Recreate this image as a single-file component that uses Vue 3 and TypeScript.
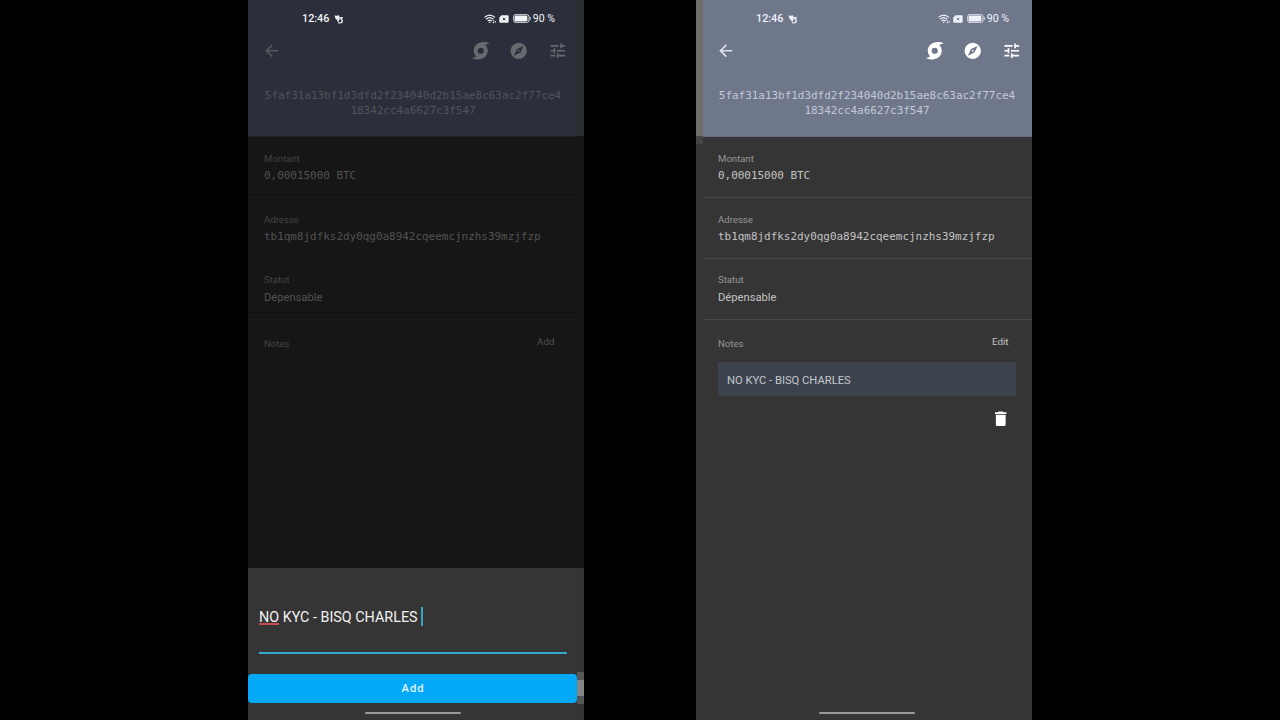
<script setup lang="ts">
interface Phone {
  id: string
  action: string
  note: string
  dimmed: boolean
}

const phones: Phone[] = [
  { id: 'editing', action: 'Add', note: '', dimmed: true },
  { id: 'saved', action: 'Edit', note: 'NO KYC - BISQ CHARLES', dimmed: false },
]

const hash = ['5faf31a13bf1d3dfd2f234040d2b15ae8c63ac2f77ce4', '18342cc4a6627c3f547']

const rows = [
  { label: 'Montant', value: '0,00015000 BTC', mono: true },
  { label: 'Adresse', value: 'tb1qm8jdfks2dy0qg0a8942cqeemcjnzhs39mzjfzp', mono: true },
  { label: 'Statut', value: 'Dépensable', mono: false },
]
</script>

<template>
  <main class="stage">
    <section v-for="p in phones" :key="p.id" class="phone" :class="p.dimmed ? 'dimmed' : 'lit'">
      <div class="screen">
        <header class="header">
          <div class="status">
            <span class="clock">12:46</span>
            <svg class="notif" viewBox="0 0 10 10">
              <path d="M0.6 1.6L3 1.8L4.8 1.2L5.6 3L5.4 5.8L4.2 8.4L3 6L1.4 4.4z" fill="currentColor" />
              <path d="M5.4 4L8 3.8L7.2 5.4L8.4 6.6L7.6 8.6L4.2 8.8" fill="none" stroke="currentColor" stroke-width="1.3" />
            </svg>
            <span class="grow"></span>
            <svg class="wifi" viewBox="0 0 12 10">
              <g fill="none" stroke="currentColor" stroke-width="1.2">
                <path d="M0.5 3.4Q5.7 -1.3 11 3.4" />
                <path d="M2.1 5.2Q5.7 2 9.4 5.2" />
                <path d="M3.7 6.9Q5.7 5.2 7.8 6.9" />
              </g>
              <path d="M4.4 7.8h2.6L5.7 9.3zM9.4 5.9l1.2 1.4h-2.4zM9.4 9.6l1.2-1.4h-2.4zM10.8 6.9h1v1.6h-1z" fill="currentColor" />
            </svg>
            <svg class="sim" viewBox="0 0 10 8">
              <path fill="currentColor" d="M2.6 0.2H8.6Q9.6 0.2 9.6 1.2V6.8Q9.6 7.8 8.6 7.8H1.3Q0.3 7.8 0.3 6.8V2.5z" />
              <path class="cut" d="M3.7 2.7l2.6 2.6M6.3 2.7L3.7 5.3" fill="none" stroke-width="0.9" />
            </svg>
            <svg class="battery" viewBox="0 0 18 9">
              <rect x="0.6" y="0.4" width="15.4" height="8.2" rx="2.4" fill="none" stroke="currentColor" stroke-width="0.8" />
              <rect x="1.6" y="1.4" width="12.8" height="6.2" rx="1.3" fill="currentColor" />
              <path d="M16.9 2.8q1 1.7 0 3.4" fill="none" stroke="currentColor" stroke-width="0.9" />
            </svg>
            <span class="percent">90 %</span>
          </div>
          <div class="toolbar">
            <svg class="icon back" viewBox="0 0 24 24"><path d="M20 11H7.83l5.59-5.59L12 4l-8 8 8 8 1.41-1.41L7.83 13H20v-2z" /></svg>
            <span class="grow"></span>
            <svg class="icon" viewBox="0 0 24 24">
              <path fill-rule="evenodd" d="M22.9 3.1C20.6 1.6 16.6 1 13 1.6C7.2 2.6 3.2 7.2 3.4 12.4C3.5 15 4.6 17.2 6.4 18.8C4.8 20.3 3 20.6 1.1 20.9C3.4 22.4 7.4 23 11 22.4C16.8 21.4 20.8 16.8 20.6 11.6C20.5 9 19.4 6.8 17.6 5.2C19.2 3.7 21 3.4 22.9 3.1zM12 8.2a3.8 3.8 0 1 0 0 7.6a3.8 3.8 0 1 0 0-7.6z" />
            </svg>
            <svg class="icon" viewBox="0 0 24 24"><path d="M12 10.9c-.61 0-1.1.49-1.1 1.1s.49 1.1 1.1 1.1c.61 0 1.1-.49 1.1-1.1s-.49-1.1-1.1-1.1zM12 2C6.48 2 2 6.48 2 12s4.48 10 10 10 10-4.48 10-10S17.52 2 12 2zm2.19 12.19L6 18l3.81-8.19L18 6l-3.81 8.19z" /></svg>
            <svg class="icon" viewBox="0 0 24 24"><path d="M3 17v2h6v-2H3zM3 5v2h10V5H3zm10 16v-2h8v-2h-8v-2h-2v6h2zM7 9v2H3v2h4v2h2V9H7zm14 4v-2H11v2h10zm-6-4h2V7h4V5h-4V3h-2v6z" /></svg>
          </div>
          <div class="hash mono"><div v-for="line in hash" :key="line">{{ line }}</div></div>
        </header>

        <div v-for="r in rows" :key="r.label" class="row" :class="r.label.toLowerCase()">
          <div class="label">{{ r.label }}</div>
          <div class="value" :class="{ mono: r.mono }">{{ r.value }}</div>
        </div>

        <div class="notes">
          <div class="label">Notes</div>
          <button class="action">{{ p.action }}</button>
        </div>
        <template v-if="p.note">
          <div class="note">{{ p.note }}</div>
          <svg class="icon trash" viewBox="0 0 24 24"><path d="M6 19c0 1.1.9 2 2 2h8c1.1 0 2-.9 2-2V7H6v12zM19 4h-3.5l-1-1h-5l-1 1H5v2h14V4z" /></svg>
        </template>

        <div v-if="p.dimmed" class="sheet">
          <div class="field">
            <span class="typo">NO</span><span class="rest">&nbsp;KYC - BISQ CHARLES</span><i class="caret"></i>
          </div>
          <button class="submit">Add</button>
        </div>
        <div class="homebar"></div>
      </div>
      <div class="edge">
        <div class="edge-top"></div>
        <div class="edge-mid"></div>
        <div v-if="p.dimmed" class="edge-sheet"><i></i></div>
      </div>
    </section>
  </main>
</template>

<style>
body {
  margin: 0;
  background: #000;
}
</style>

<style scoped>
* {
  box-sizing: border-box;
}
.stage {
  width: 1280px;
  height: 720px;
  padding: 0 248px;
  display: flex;
  justify-content: space-between;
  background: #000;
  overflow: hidden;
  font-family: Roboto, "Liberation Sans", sans-serif;
}
.phone {
  width: 336px;
  height: 720px;
  display: flex;
  color: var(--text);
  background: var(--body);
}
.dimmed {
  --head: #2c2f3b;
  --body: #161616;
  --edge-head: #2b2c2e;
  --text: #525252;
  --label: #434343;
  --hash: #515359;
  --icon: #68696c;
  --back: #55575c;
  --line: #1c1c1c;
  --status: #f3f4f6;
}
.lit {
  --head: #6f778b;
  --body: #353535;
  --edge-head: #6e6d69;
  --text: #c3c3c3;
  --label: #969696;
  --hash: #c3c9d6;
  --icon: #fff;
  --back: #dce0ef;
  --line: #464746;
  --status: #eff2fb;
  flex-direction: row-reverse;
}
.screen {
  width: 329px;
  height: 720px;
  display: flex;
  flex-direction: column;
  flex: none;
}
.lit .screen {
  --shift: -1px;
}
.header {
  height: 137px;
  background: var(--head);
  border-bottom: 1px solid #202229;
  flex: none;
}
.lit .header {
  border-bottom-color: #656c7d;
}
.status,
.toolbar,
.hash,
.row > div,
.notes {
  transform: translateX(var(--shift, 0));
}
.status {
  height: 37px;
  padding: 0 22px 0 54px;
  display: flex;
  align-items: center;
  color: var(--status);
  font-size: 10.8px;
}
.grow {
  flex: 1;
}
.clock {
  font-weight: 500;
}
.notif {
  width: 10px;
  height: 10px;
  margin-left: 5px;
}
.wifi {
  width: 12px;
  height: 10px;
  margin-right: 3px;
}
.sim {
  width: 10px;
  height: 8px;
  margin-right: 4px;
}
.cut {
  stroke: var(--head);
}
.battery {
  width: 18px;
  height: 9px;
  margin-right: 2px;
}
.percent {
  font-size: 10.6px;
}
.toolbar {
  height: 27px;
  padding: 0 10px 0 14px;
  display: flex;
  align-items: center;
  gap: 18.8px;
}
.icon {
  width: 19.5px;
  height: 19.5px;
  fill: var(--icon);
  flex: none;
}
.back {
  fill: var(--back);
}
.mono {
  font-family: "DejaVu Sans Mono", "Liberation Mono", monospace;
  font-size: 10.95px;
}
.hash {
  margin-top: 25px;
  padding-left: 1px;
  text-align: center;
  line-height: 14.5px;
  color: var(--hash);
}
.row {
  height: 61px;
  padding: 15px 16px 0;
  border-bottom: 1px solid var(--line);
  flex: none;
}
.dimmed .adresse {
  border-bottom-color: transparent;
}
.statut {
  padding-top: 14px;
}
.label {
  font-size: 9.6px;
  line-height: 14px;
  color: var(--label);
}
.value {
  margin-top: 4px;
  line-height: 14px;
  font-size: 11.2px;
}
.value.mono {
  margin-top: 3px;
  font-size: 10.95px;
}
.notes {
  height: 42px;
  padding: 14px 22.5px 0 16px;
  display: flex;
  justify-content: space-between;
  flex: none;
}
.notes .label {
  padding-top: 3px;
}
button {
  border: 0;
  padding: 0;
  background: none;
  font-family: inherit;
}
.action {
  height: 16px;
  font-size: 9.8px;
  line-height: 16px;
  color: var(--text);
}
.note {
  height: 34px;
  margin: 0 16px 0 15px;
  padding: 1px 0 0 9px;
  background: #3c434d;
  font-size: 11.2px;
  line-height: 35px;
  color: #c3c7cf;
  flex: none;
}
.trash {
  align-self: flex-end;
  margin: 12.6px 21.9px 0 0;
}
.sheet {
  height: 152px;
  margin-top: auto;
  background: #353535;
  display: flex;
  flex-direction: column;
}
.field {
  height: 48px;
  margin: 38px 10px 0 11px;
  border-bottom: 2px solid #36a8ca;
  display: flex;
  align-items: flex-start;
  font-size: 14.35px;
  line-height: 24px;
  color: #f2f2f2;
}
.typo {
  height: 19px;
  border-bottom: 2px solid #c84b4f;
}
.caret {
  width: 2px;
  height: 19px;
  margin: 1px 0 0 3px;
  background: #35a5c4;
}
.submit {
  height: 29px;
  margin-top: 20px;
  padding: 0 0 1px 1px;
  border-radius: 4px;
  background: #03a9f7;
  color: #e4f5ff;
  font-size: 11.2px;
  font-weight: 500;
  letter-spacing: 1px;
}
.homebar {
  width: 96px;
  height: 2px;
  margin: auto 0 6px 116px;
  border-radius: 1px;
  background: #999;
  flex: none;
}
.dimmed .homebar {
  margin: -8px 0 6px 117px;
}
.edge {
  width: 7px;
  display: flex;
  flex-direction: column;
}
.edge-top {
  height: 136px;
  background: var(--edge-head);
}
.edge-mid {
  flex: 1;
}
.lit .edge-mid {
  border-top: 8px solid #464646;
}
.edge-sheet {
  height: 152px;
  background: #333;
  padding-top: 104px;
}
.edge-sheet i {
  display: block;
  height: 32px;
  background: #868686;
  border: solid #555856;
  border-width: 8px 0;
}
</style>
